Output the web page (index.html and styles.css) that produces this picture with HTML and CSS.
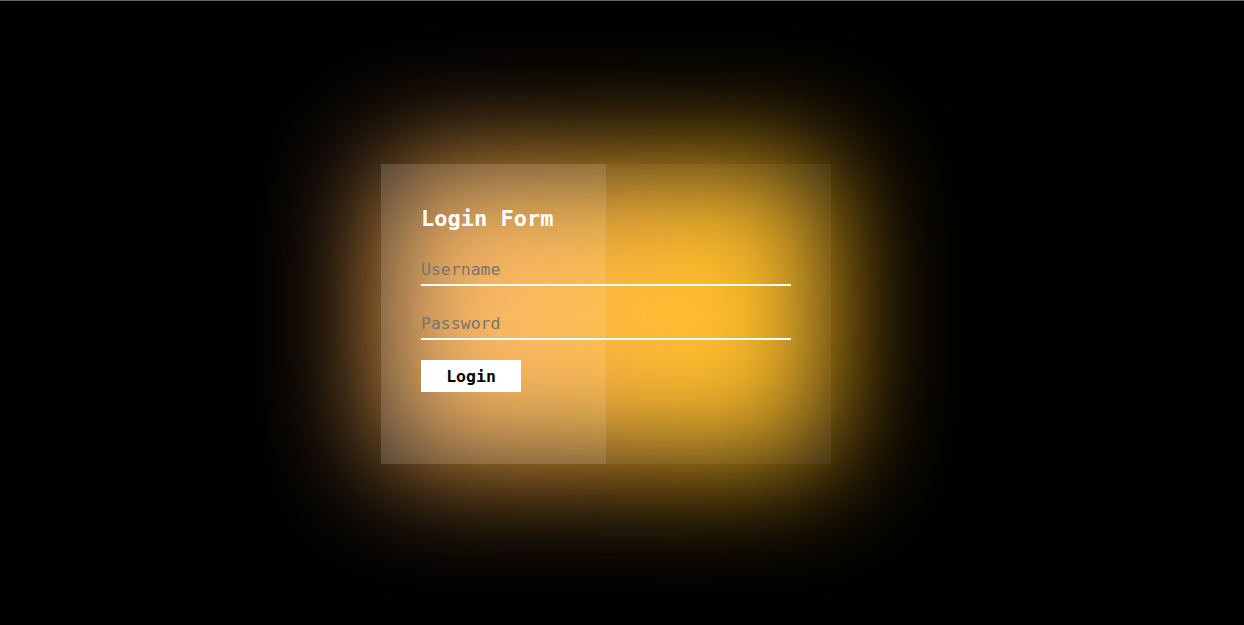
FILE: index.html
```html
<!DOCTYPE html>
<html lang="en">
<head>
<meta charset="utf-8">
<title>Login Form</title>
<link rel="stylesheet" href="styles.css">
</head>
<body>
<div class="topline"></div>
<main class="page">
  <div class="stage">
    <div class="glow"></div>
    <form class="card">
      <h1 class="title">Login Form</h1>
      <input class="field" type="text" placeholder="Username">
      <input class="field" type="password" placeholder="Password">
      <button class="btn" type="button">Login</button>
    </form>
  </div>
</main>
</body>
</html>
```
FILE: styles.css
```css
html, body {
  margin: 0;
  padding: 0;
  background: #000;
  height: 100%;
  overflow: hidden;
}
body {
  font-family: "DejaVu Sans Mono", "Liberation Mono", monospace;
}
.topline {
  height: 1px;
  background: #5c6670;
}
.page {
  display: flex;
  justify-content: center;
  align-items: flex-start;
  padding: 163px 32px 0 0;
}
.stage {
  position: relative;
  width: 450px;
  height: 300px;
}
.glow {
  position: absolute;
  inset: 0;
  background: linear-gradient(90deg, #f5a856 0%, #fcae40 40%, #ffbc1e 72%, #ffb81a 100%);
  filter: blur(60px);
}
.card {
  position: relative;
  box-sizing: border-box;
  width: 450px;
  height: 300px;
  padding: 40px;
  display: flex;
  flex-direction: column;
  align-items: flex-start;
  background: linear-gradient(90deg, rgba(255,255,255,0.15) 50%, rgba(255,255,255,0.05) 50%);
}
.title {
  margin: 2px 0 22px;
  font-size: 22px;
  font-weight: bold;
  color: #fff;
  line-height: 26px;
}
.field {
  box-sizing: border-box;
  width: 370px;
  height: 32px;
  padding: 0;
  margin: 0 0 22px;
  border: none;
  border-bottom: 2px solid #fff;
  background: transparent;
  outline: none;
  font-family: inherit;
  font-size: 16.5px;
  color: #fff;
}
.field::placeholder {
  color: #757575;
}
.btn {
  margin-top: -2px;
  width: 100px;
  height: 32px;
  border: none;
  background: #fff;
  color: #000;
  font-family: inherit;
  font-size: 16.5px;
  font-weight: bold;
  padding: 0;
}
```
